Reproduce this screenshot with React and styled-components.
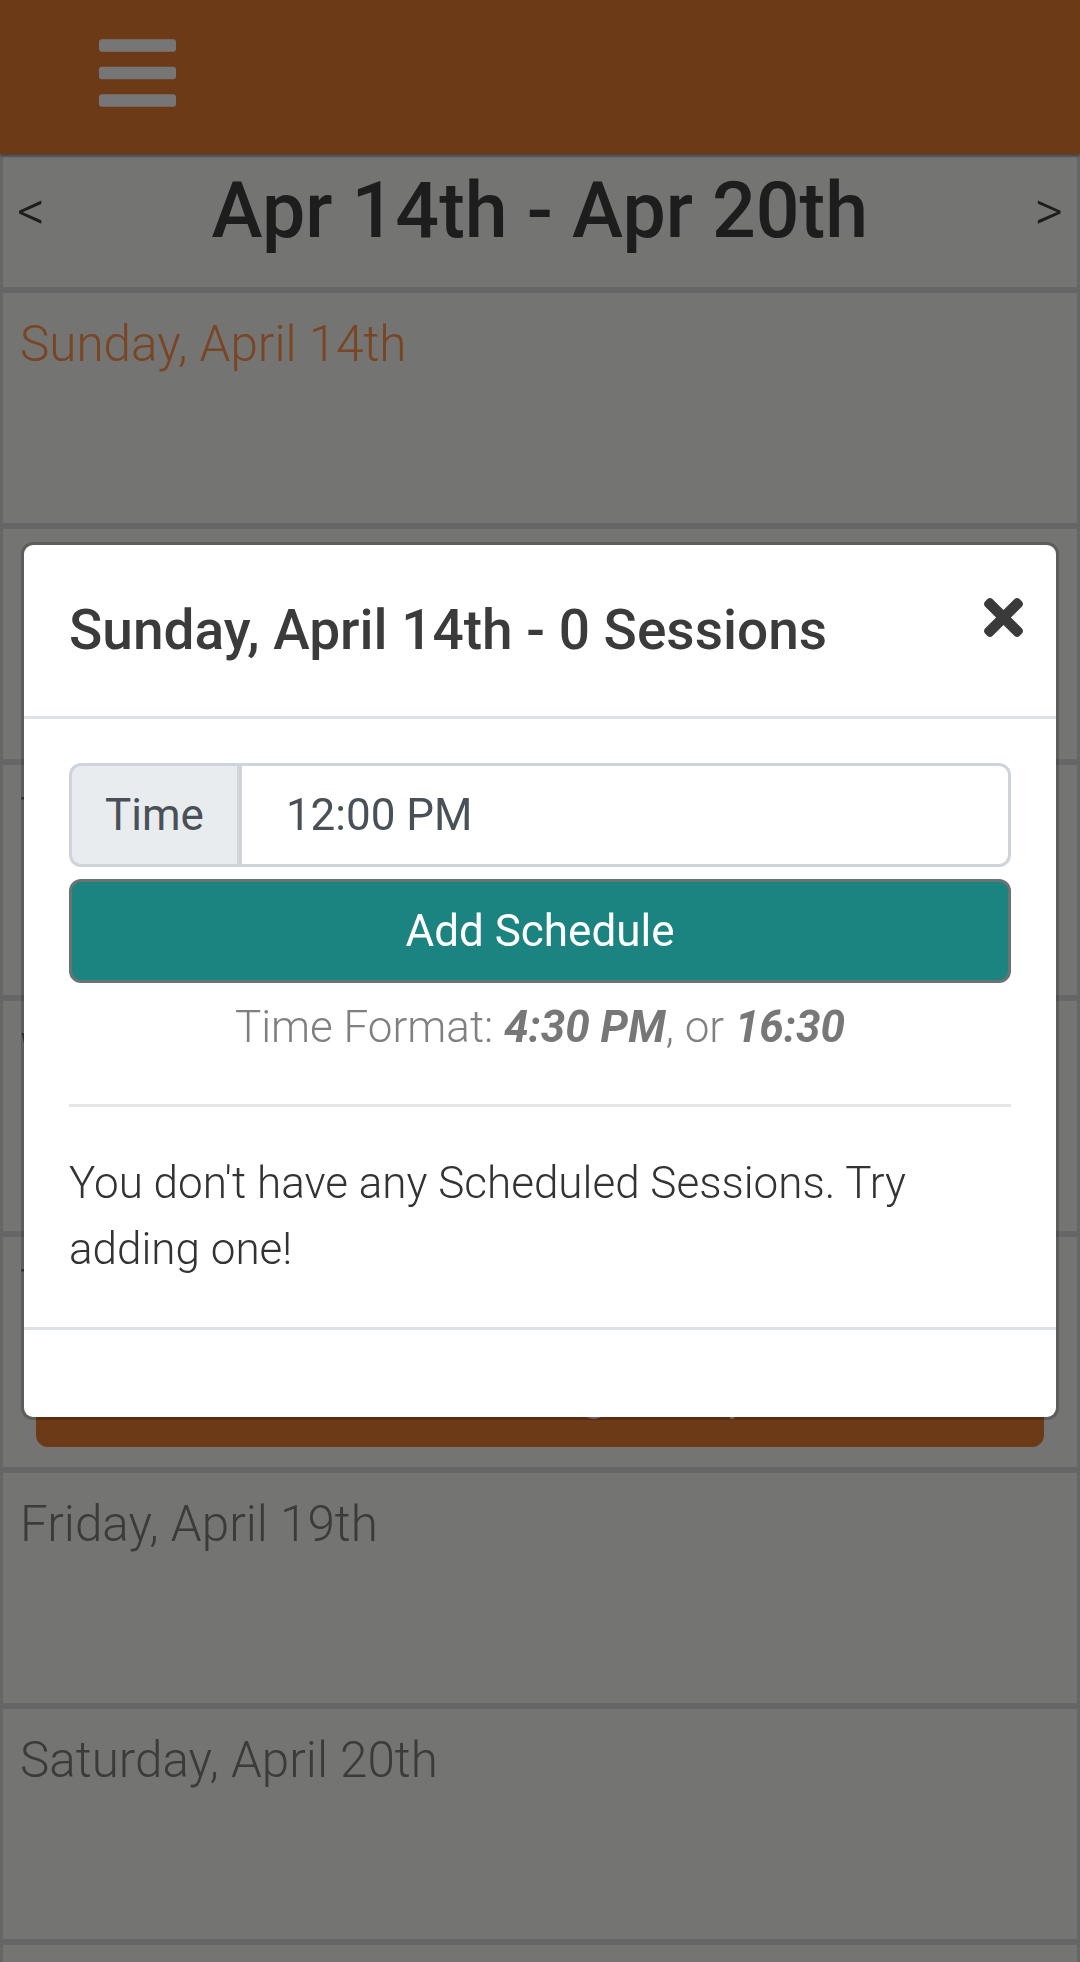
import React from "react";
import styled, { createGlobalStyle } from "styled-components";

const GlobalStyle = createGlobalStyle`
  html, body {
    margin: 0;
    padding: 0;
  }
  body {
    font-family: Roboto, "Noto Sans", "Liberation Sans", sans-serif;
    background: #cccccc;
    overflow: hidden;
  }
  * {
    box-sizing: border-box;
  }
`;

const Page = styled.div`
  width: 1080px;
  height: 1962px;
  overflow: hidden;
  background: #cccccc;
`;

const TopBar = styled.header`
  position: relative;
  z-index: 1;
  height: 154px;
  padding: 39px 0 0 99px;
  background: #da742e;
  box-shadow: 0 2px 3px rgba(0, 0, 0, 0.35);
`;

const MenuIcon = styled.svg`
  display: block;
  width: 77px;
  height: 68px;
  fill: #efecec;
`;

const Cell = styled.div`
  height: ${props => props.h || 236}px;
  border: 3px solid #cccccc;
  background: #e8e8e4;
`;

const WeekNav = styled(Cell)`
  display: flex;
  align-items: center;
  justify-content: space-between;
  padding: 8px 14px 30px;
`;

const Arrow = styled.span`
  font-size: 55px;
  font-weight: 300;
  line-height: 1;
  color: #3a3a3a;
`;

const WeekTitle = styled.h1`
  margin: 0;
  font-size: 77px;
  font-weight: 500;
  line-height: 92px;
  color: #3a3a3a;
`;

const DayCell = styled(Cell)`
  padding: 12px 17px 0;
`;

const DayName = styled.div`
  font-size: 49.4px;
  font-weight: 300;
  line-height: 78px;
  color: ${props => (props.today ? "#f28a48" : "#767676")};
`;

const SessionButton = styled.div`
  display: flex;
  align-items: center;
  justify-content: center;
  height: 104px;
  margin: 16px 16px 0;
  padding-left: 40px;
  border-radius: 12px;
  background: #da742e;
  color: #fff;
  font-size: 44px;
`;

const Backdrop = styled.div`
  position: fixed;
  inset: 0;
  z-index: 10;
  display: flex;
  align-items: center;
  justify-content: center;
  padding: 0 21px;
  background: rgba(0, 0, 0, 0.5);
`;

const Modal = styled.div`
  width: 100%;
  background: #fff;
  background-clip: padding-box;
  border: 3px solid rgba(0, 0, 0, 0.2);
  border-radius: 12px;
`;

const ModalHeader = styled.div`
  display: flex;
  align-items: flex-start;
  justify-content: space-between;
  padding: 44px 33px 44px 45px;
  border-bottom: 3px solid #dee2e6;
`;

const ModalTitle = styled.h5`
  margin: 0;
  font-size: 55px;
  font-weight: 500;
  line-height: 83px;
  color: #3b3b3b;
`;

const CloseButton = styled.button`
  margin-top: 9px;
  padding: 0;
  border: none;
  background: none;
  cursor: pointer;
  svg {
    display: block;
    width: 39px;
    height: 39px;
    fill: #3a3a3a;
  }
`;

const ModalBody = styled.div`
  padding: 44px 45px 45px;
`;

const InputGroup = styled.div`
  display: flex;
  height: 104px;
`;

const InputLabel = styled.span`
  display: flex;
  align-items: center;
  padding: 0 33px;
  background: #e9ecef;
  border: 3px solid #ced4da;
  border-radius: 12px 0 0 12px;
  font-size: 44px;
  color: #495057;
`;

const TimeInput = styled.input`
  flex: 1;
  min-width: 0;
  padding: 0 0 0 44px;
  border: 3px solid #ced4da;
  border-left-width: 2px;
  border-radius: 0 12px 12px 0;
  background: #fff;
  font-family: inherit;
  font-size: 44px;
  color: #495057;
  outline: none;
`;

const AddButton = styled.button`
  display: block;
  width: 100%;
  height: 104px;
  margin-top: 12px;
  border: 3px solid #6a7373;
  border-radius: 12px;
  background: #1b8480;
  color: #fff;
  font-family: inherit;
  font-size: 44px;
  font-weight: 400;
`;

const FormatNote = styled.div`
  margin-top: 11px;
  font-size: 44px;
  font-weight: 300;
  line-height: 66px;
  text-align: center;
  color: #808080;
  b {
    font-weight: 700;
    font-style: italic;
    color: #777;
  }
`;

const Divider = styled.hr`
  margin: 44px 0 0;
  border: 0;
  border-top: 3px solid #e6e6e6;
`;

const EmptyText = styled.p`
  margin: 43px 0 0;
  font-size: 44px;
  font-weight: 300;
  line-height: 66px;
  color: #333;
`;

const ModalFooter = styled.div`
  height: 90px;
  border-top: 3px solid #dee2e6;
`;

const days = [
  { name: "Sunday, April 14th", today: true },
  { name: "Monday, April 15th" },
  { name: "Tuesday, April 16th" },
  { name: "Wednesday, April 17th" },
  { name: "Thursday, April 18th", session: "Team Training at 10 pm" },
  { name: "Friday, April 19th" },
  { name: "Saturday, April 20th" }
];

const App = () => (
  <Page>
    <GlobalStyle />
    <TopBar>
      <MenuIcon viewBox="0 60 448 392">
        <path d="M16 132h416c8.837 0 16-7.163 16-16V76c0-8.837-7.163-16-16-16H16C7.163 60 0 67.163 0 76v40c0 8.837 7.163 16 16 16zm0 160h416c8.837 0 16-7.163 16-16v-40c0-8.837-7.163-16-16-16H16c-8.837 0-16 7.163-16 16v40c0 8.837 7.163 16 16 16zm0 160h416c8.837 0 16-7.163 16-16v-40c0-8.837-7.163-16-16-16H16c-8.837 0-16 7.163-16 16v40c0 8.837 7.163 16 16 16z" />
      </MenuIcon>
    </TopBar>
    <WeekNav h={136}>
      <Arrow>&lt;</Arrow>
      <WeekTitle>Apr 14th - Apr 20th</WeekTitle>
      <Arrow>&gt;</Arrow>
    </WeekNav>
    {days.map(day => (
      <DayCell key={day.name}>
        <DayName today={day.today}>{day.name}</DayName>
        {day.session && <SessionButton>{day.session}</SessionButton>}
      </DayCell>
    ))}
    <DayCell />

    <Backdrop>
      <Modal>
        <ModalHeader>
          <ModalTitle>Sunday, April 14th - 0 Sessions</ModalTitle>
          <CloseButton aria-label="Close">
            <svg viewBox="0 80 352 352">
              <path d="M242.72 256l100.07-100.07c12.28-12.28 12.28-32.19 0-44.48l-22.24-22.24c-12.28-12.28-32.19-12.28-44.48 0L176 189.28 75.93 89.21c-12.28-12.28-32.19-12.28-44.48 0L9.21 111.45c-12.28 12.28-12.28 32.19 0 44.48L109.28 256 9.21 356.07c-12.28 12.28-12.28 32.19 0 44.48l22.24 22.24c12.28 12.28 32.2 12.28 44.48 0L176 322.72l100.07 100.07c12.28 12.28 32.2 12.28 44.48 0l22.24-22.24c12.28-12.28 12.28-32.19 0-44.48L242.72 256z" />
            </svg>
          </CloseButton>
        </ModalHeader>
        <ModalBody>
          <InputGroup>
            <InputLabel>Time</InputLabel>
            <TimeInput readOnly value="12:00 PM" />
          </InputGroup>
          <AddButton>Add Schedule</AddButton>
          <FormatNote>
            Time Format: <b>4:30 PM</b>, or <b>16:30</b>
          </FormatNote>
          <Divider />
          <EmptyText>
            You don't have any Scheduled Sessions. Try adding one!
          </EmptyText>
        </ModalBody>
        <ModalFooter />
      </Modal>
    </Backdrop>
  </Page>
);

export default App;
